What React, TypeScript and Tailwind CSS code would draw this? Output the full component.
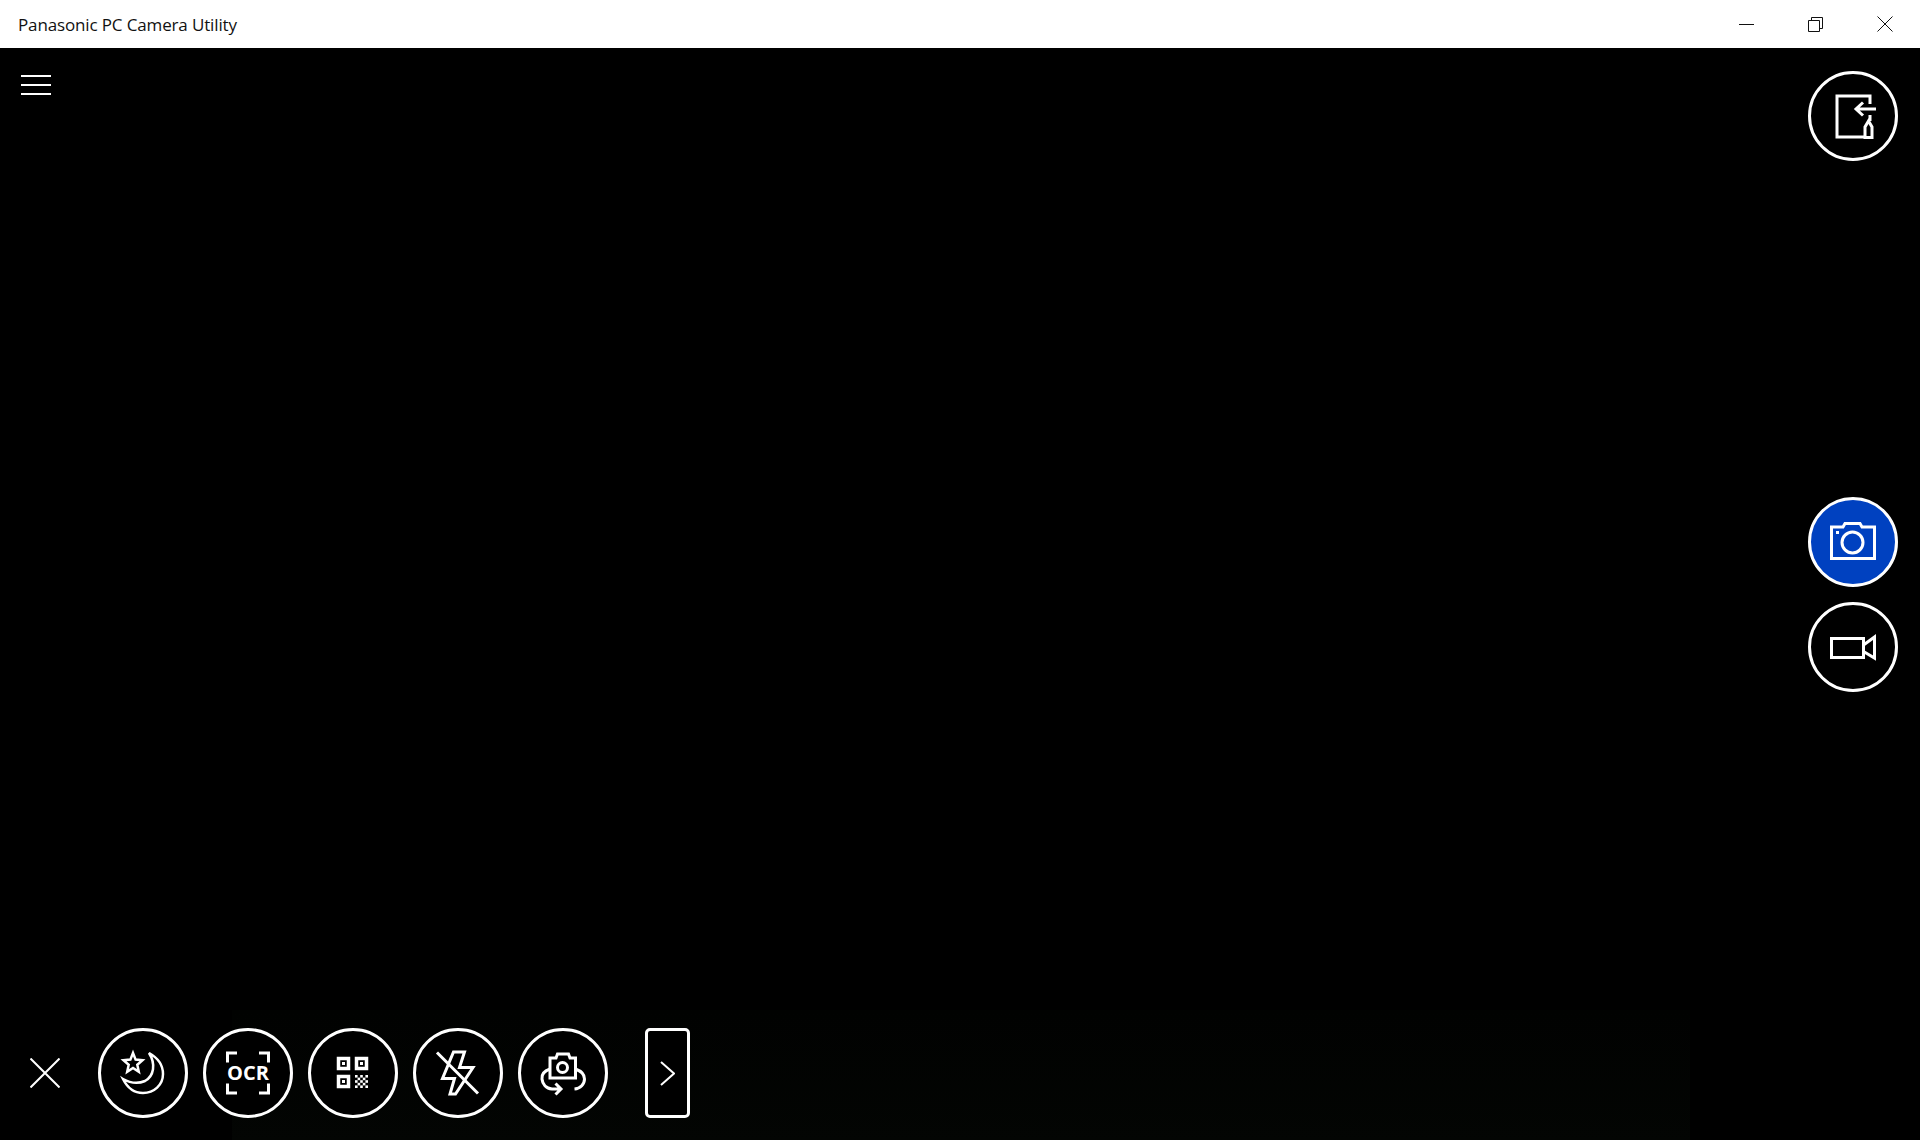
import type { ReactNode } from 'react';

function RoundButton({ children, active }: { children: ReactNode; active?: boolean }) {
  return (
    <button className={`w-[90px] h-[90px] shrink-0 rounded-full border-[3px] border-white ${active ? 'bg-[#0041c0]' : 'bg-black'}`}>
      <svg viewBox="0 0 84 84" className="w-[84px] h-[84px]" fill="none" stroke="white" strokeWidth="3">
        <g transform="translate(-3 -3)">{children}</g>
      </svg>
    </button>
  );
}

const checker = [0, 1, 2, 3, 4].flatMap(row =>
  [0, 1, 2, 3, 4].filter(col => (row + col) % 2 === 0).map(col => ({ row, col }))
);

export default function App() {
  return (
    <div className="w-full h-screen flex flex-col bg-black font-['Open_Sans',sans-serif] overflow-hidden">
      <header className="h-12 shrink-0 bg-white flex items-center justify-between pl-[18px] pr-px">
        <span className="text-[17px] leading-none text-[#111] tracking-[-0.14px]">Panasonic PC Camera Utility</span>
        <div className="flex">
          <div className="w-[69px] h-12 flex items-center justify-center">
            <svg width="15" height="15" viewBox="0 0 15 15" stroke="#111" strokeWidth="1"><path d="M0 7.5H15" /></svg>
          </div>
          <div className="w-[69px] h-12 flex items-center justify-center">
            <svg width="15" height="15" viewBox="0 0 15 15" fill="none" stroke="#111" strokeWidth="1"><path d="M.5 3.5H11.5V14.5H.5Z M3.5 3.5V.5H14.5V11.5H11.5" /></svg>
          </div>
          <div className="w-[69px] h-12 flex items-center justify-center">
            <svg width="16" height="16" viewBox="0 0 16 16" stroke="#111" strokeWidth="1"><path d="M.5 .5L15.5 15.5M15.5 .5L.5 15.5" /></svg>
          </div>
        </div>
      </header>

      <main className="relative flex-1 flex justify-between">
        {/* faint camera noise behind the toolbar */}
        <div className="absolute bottom-0 left-[232px] w-[1458px] h-[130px] bg-gradient-to-b from-[#010201] to-[#030503]" />

        <div className="relative flex flex-col justify-between pb-[22px]">
          <button className="ml-[21px] mt-[27px] w-[30px] flex flex-col gap-[7px]">
            <span className="h-0.5 bg-white" />
            <span className="h-0.5 bg-white" />
            <span className="h-0.5 bg-white" />
          </button>

          <div className="flex items-center">
            <svg width="30" height="30" viewBox="0 0 30 30" stroke="white" strokeWidth="2" className="ml-[30px] mr-[38px]">
              <path d="M.5 .5L29.5 29.5M29.5 .5L.5 29.5" />
            </svg>
            <div className="flex gap-[15px]">
              <RoundButton>
                <path d="M35 25L37.6 31.6L44.5 32.2L39.3 36.8L40.8 43.8L35 40L29.2 43.8L30.7 36.8L25.5 32.2L32.4 31.6Z" strokeWidth="2.5" />
                <path d="M51 25C60 30 65 37 65 46C65 57 56 65 45 65C36 65 29 59 25 51C32 55 40 56 47 53C56 48 58 36 51 25Z" strokeWidth="2.5" />
              </RoundButton>
              <RoundButton>
                <path strokeWidth="3" d="M34 25H24.5V34.5M56 25H65.5V34.5M34 65H24.5V55.5M56 65H65.5V55.5" />
                <text x="45" y="52" textAnchor="middle" fill="white" stroke="none" fontSize="20" fontWeight="700" fontFamily="'Open Sans', sans-serif">OCR</text>
              </RoundButton>
              <RoundButton>
                <g strokeWidth="3.5">
                  <rect x="30.5" y="30.5" width="10" height="10" />
                  <rect x="48.5" y="30.5" width="10" height="10" />
                  <rect x="30.5" y="48.5" width="10" height="10" />
                </g>
                <g fill="white" stroke="none">
                  <rect x="34" y="34" width="3" height="3" />
                  <rect x="52" y="34" width="3" height="3" />
                  <rect x="34" y="52" width="3" height="3" />
                  {checker.map(({ row, col }) => (
                    <rect key={`${row}-${col}`} x={47 + col * 2.6} y={47 + row * 2.6} width="2.6" height="2.6" />
                  ))}
                </g>
              </RoundButton>
              <RoundButton>
                <path d="M40.5 24H51.5L46.5 39.5H60L42.5 66H37L41.5 50.5H29.5Z" />
                <path d="M24 24.5L65 65.5" />
              </RoundButton>
              <RoundButton>
                <path d="M32 30H38L39.5 26H50.5L52 30H57.5V50H32Z" />
                <circle cx="44.5" cy="39.5" r="5" />
                <path d="M32 41C26 43 23.5 47 24 51C24.5 56 28 60.5 34 61H43M37.5 55.5L43 61L37.5 66.5" />
                <path d="M57.5 41C63 43 66.5 47 66.5 51C66.5 56 62.5 60.5 56.5 61" />
              </RoundButton>
            </div>
            <button className="ml-[37px] w-[45px] h-[90px] rounded-[5px] border-[3px] border-white flex items-center justify-center bg-black">
              <svg width="15" height="25" viewBox="0 0 15 25" fill="none" stroke="white" strokeWidth="2"><path d="M1 1L14 12.5L1 24" /></svg>
            </button>
          </div>
        </div>

        <div className="relative flex flex-col pt-[23px] pr-[22px]">
          <RoundButton>
            <path d="M62 33V25H29V66H57" />
            <path d="M68 38H48M55 31.5L48 38L55 44.5M62 44V50" />
            <path d="M57 66.5V56L60.5 50L64 56V66.5Z" />
          </RoundButton>
          <div className="mt-[336px] flex flex-col gap-[15px]">
            <RoundButton active>
              <path d="M23.5 30H35L37 26.5H52L54 30H66.5V61.5H23.5Z" />
              <circle cx="44.5" cy="45.5" r="10.5" />
              <rect x="28" y="34" width="3" height="3" fill="white" stroke="none" />
            </RoundButton>
            <RoundButton>
              <path d="M23.5 36.5H55.5V55.5H23.5Z" />
              <path d="M55.5 43L66.5 35V56L55.5 49.5" />
            </RoundButton>
          </div>
        </div>
      </main>
    </div>
  );
}
